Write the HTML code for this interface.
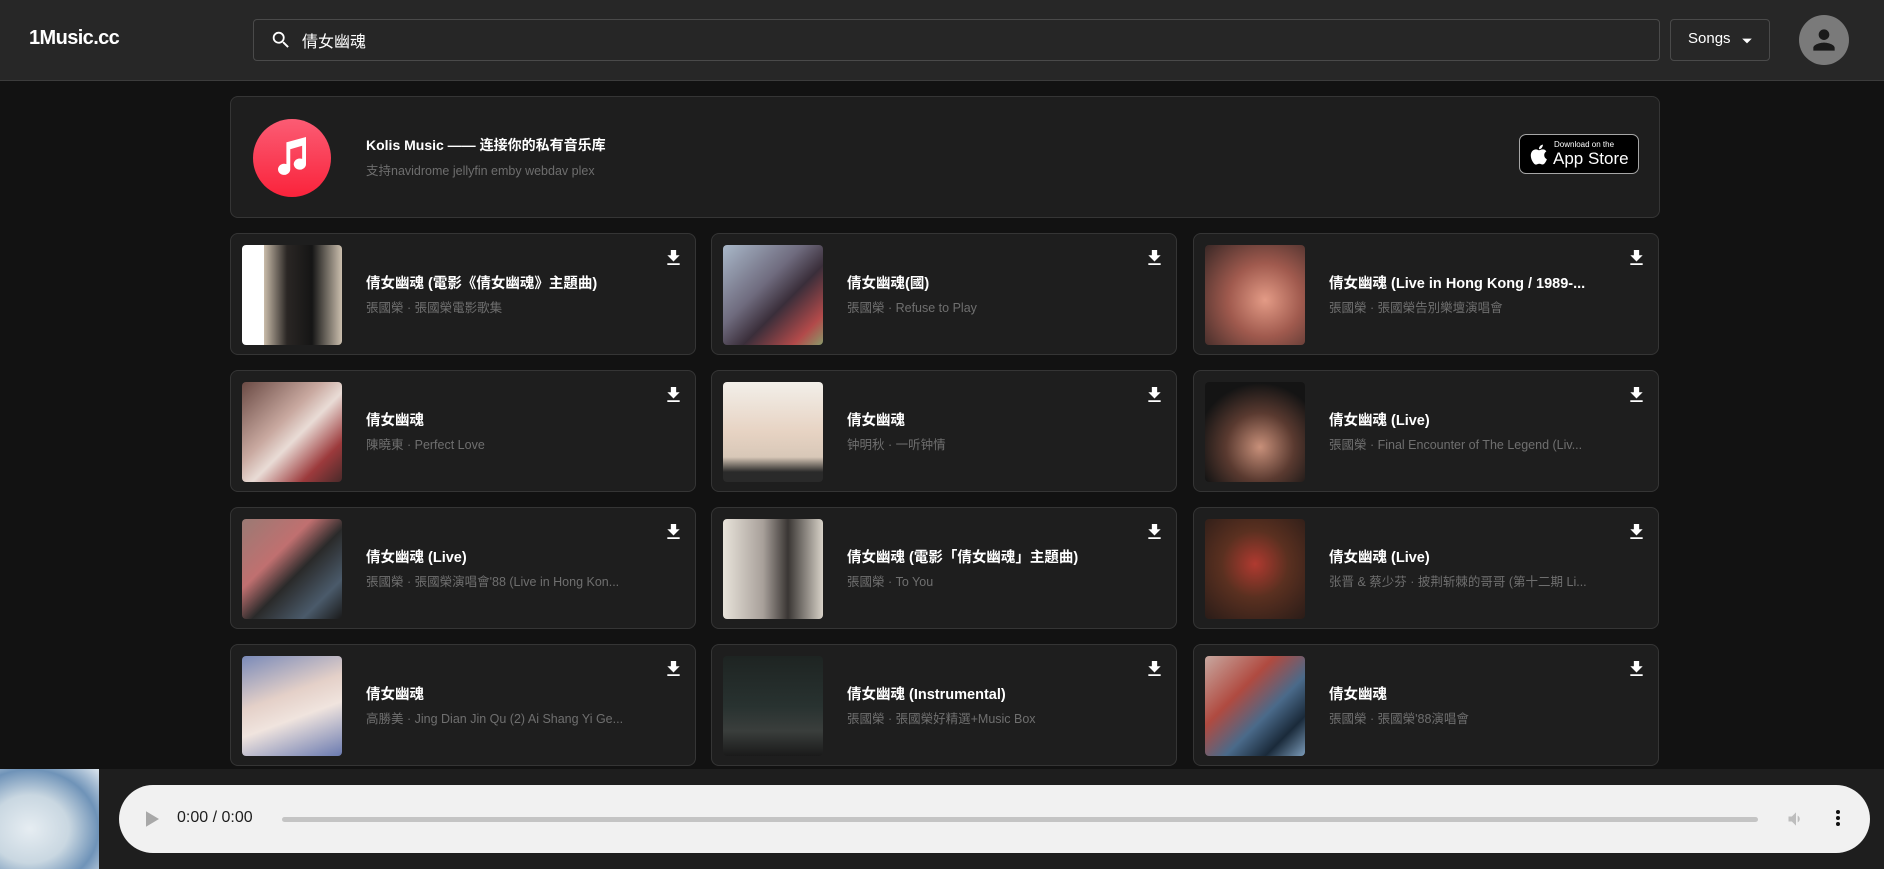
<!DOCTYPE html>
<html><head><meta charset="utf-8"><style>
*{box-sizing:border-box;margin:0;padding:0}
body{width:1884px;height:869px;background:#121212;font-family:"Liberation Sans","Noto Sans CJK SC",sans-serif;overflow:hidden;position:relative;color:#fff}
.hdr{position:absolute;left:0;top:0;width:1884px;height:81px;background:#272727;border-bottom:1px solid #3c3c3c}
.logo{position:absolute;left:29px;top:27px;font-size:20px;font-weight:bold;letter-spacing:-0.6px}
.search{position:absolute;left:253px;top:19px;width:1407px;height:42px;border:1px solid #4a4a4a;border-radius:4px;background:#262626}
.search span{position:absolute;left:48px;top:8px;font-size:16px}
.songs{position:absolute;left:1670px;top:19px;width:100px;height:42px;border:1px solid #4a4a4a;border-radius:4px;font-size:15px}
.songs span{position:absolute;left:17px;top:10px}
.avatar{position:absolute;left:1799px;top:15px;width:50px;height:50px;border-radius:50%;background:#7a7a7a}
.card{position:absolute;background:#1e1e1e;border:1px solid #353535;border-radius:8px}
.banner{left:230px;top:96px;width:1430px;height:122px}
.micon{position:absolute;left:22px;top:22px;width:78px;height:78px;border-radius:50%;background:linear-gradient(#fb5c74,#fa233b)}
.bt{position:absolute;left:135px;top:38px;font-size:14px;font-weight:bold}
.bs{position:absolute;left:135px;top:63px;font-size:12.5px;color:#6e6e6e}
.app{position:absolute;left:1288px;top:37px;width:120px;height:40px;background:#000;border:1px solid #a6a6a6;border-radius:7px}
.song{width:466px;height:122px}
.art{position:absolute;left:11px;top:11px;width:100px;height:100px;border-radius:4px}
.t{position:absolute;left:135px;top:38px;font-size:14.5px;font-weight:bold;white-space:nowrap;max-width:270px;overflow:hidden;text-overflow:ellipsis}
.s{position:absolute;left:135px;top:63px;font-size:12.5px;color:#6f6f6f;white-space:nowrap;max-width:270px;overflow:hidden;text-overflow:ellipsis}
.dl{position:absolute;left:436px;top:16px}
.player{position:absolute;left:0;top:769px;width:1884px;height:100px;background:#1e1e1e}
.thumb{position:absolute;left:0;top:0;width:99px;height:100px;background:radial-gradient(ellipse at 30% 60%,#e6edf2 0,#c9d7e1 40%,#6f93b8 70%,#dde6ee 100%)}
.pill{position:absolute;left:119px;top:16px;width:1751px;height:68px;background:#f1f1f1;border-radius:34px}
</style></head><body>
<div class="hdr">
<div class="logo">1Music.cc</div>
<div class="search"><svg style="position:absolute;left:16px;top:9px" width="22" height="22" viewBox="0 0 24 24"><path fill="#fff" d="M15.5 14h-.79l-.28-.27A6.47 6.47 0 0016 9.5 6.5 6.5 0 109.5 16c1.61 0 3.090-.59 4.23-1.57l.27.28v.79l5 4.99L20.49 19l-4.99-5zm-6 0C7.01 14 5 11.99 5 9.5S7.01 5 9.5 5 14 7.01 14 9.5 11.99 14 9.5 14z"/></svg><span>倩女幽魂</span></div>
<div class="songs"><span>Songs</span><svg style="position:absolute;left:70px;top:15px" width="12" height="12" viewBox="0 0 10 10"><path fill="#fff" d="M1 3h8L5 7z"/></svg></div>
<div class="avatar"><svg style="position:absolute;left:9px;top:9px" width="32" height="32" viewBox="0 0 24 24"><path fill="#1a1a1a" d="M12 12c2.2 0 4-1.8 4-4s-1.8-4-4-4-4 1.8-4 4 1.8 4 4 4zm0 2c-2.7 0-8 1.3-8 4v2h16v-2c0-2.7-5.3-4-8-4z"/></svg></div>
</div>

<div class="card banner">
<div class="micon"><svg style="position:absolute;left:18px;top:16px" width="42" height="46" viewBox="0 0 24 26"><path fill="#fff" d="M9 4l11-3v15.5a3.5 3.2 0 11-2.2-3V6L11 8v11.5a3.5 3.2 0 11-2.2-3V4z"/></svg></div>
<div class="bt">Kolis Music —— 连接你的私有音乐库</div>
<div class="bs">支持navidrome jellyfin emby webdav plex</div>
<div class="app"><svg style="position:absolute;left:8px;top:8px" width="20" height="23" viewBox="0 0 20 24"><path fill="#fff" d="M16.5 12.6c0-2.6 2.1-3.8 2.2-3.9-1.2-1.8-3.1-2-3.7-2-1.6-.2-3.1.9-3.9.9-.8 0-2-.9-3.4-.9C5.9 6.8 4.3 7.8 3.4 9.300c-1.9 3.2-.5 8 1.3 10.6.9 1.3 1.9 2.7 3.3 2.6 1.3-.1 1.8-.9 3.4-.9s2 .9 3.4.8c1.4 0 2.3-1.3 3.1-2.6 1-1.5 1.4-2.9 1.4-3-.1 0-2.8-1-2.8-4.2zM14 4.9c.7-.9 1.2-2 1.1-3.2-1 0-2.3.7-3 1.6-.7.8-1.200 2-1.1 3.1 1.2.1 2.3-.6 3-1.5z"/></svg><div style="position:absolute;left:34px;top:5px;font-size:8px">Download on the</div><div style="position:absolute;left:33px;top:14px;font-size:17px">App Store</div></div>
</div>

<div class="card song" style="left:230px;top:233px"><div class="art" style="background:linear-gradient(90deg,#fff 0 22%,#c9bcaa 22%,#2a2624 45%,#151515 70%,#cbbfae 100%)"></div><div class="t">倩女幽魂 (電影《倩女幽魂》主題曲)</div><div class="s">張國榮 · 張國榮電影歌集</div><svg class="dl" width="13" height="15" viewBox="0 0 14 17"><path fill="#fff" d="M14 6h-4V0H4v6H0l7 7zM0 15v2h14v-2z"/></svg></div>
<div class="card song" style="left:711px;top:233px"><div class="art" style="background:linear-gradient(135deg,#a9b8c9,#6f6b7e 40%,#3a2e3a 60%,#b24a4a 85%,#8a9a6a)"></div><div class="t">倩女幽魂(國)</div><div class="s">張國榮 · Refuse to Play</div><svg class="dl" width="13" height="15" viewBox="0 0 14 17"><path fill="#fff" d="M14 6h-4V0H4v6H0l7 7zM0 15v2h14v-2z"/></svg></div>
<div class="card song" style="left:1193px;top:233px"><div class="art" style="background:radial-gradient(circle at 60% 55%,#e39b86,#a05a4e 45%,#3a2826)"></div><div class="t">倩女幽魂 (Live in Hong Kong / 1989-...</div><div class="s">張國榮 · 張國榮告別樂壇演唱會</div><svg class="dl" width="13" height="15" viewBox="0 0 14 17"><path fill="#fff" d="M14 6h-4V0H4v6H0l7 7zM0 15v2h14v-2z"/></svg></div>

<div class="card song" style="left:230px;top:370px"><div class="art" style="background:linear-gradient(135deg,#6a4a44,#c9a9a0 40%,#e9dcd6 55%,#9c3a3c 80%,#4a2a2a)"></div><div class="t">倩女幽魂</div><div class="s">陳曉東 · Perfect Love</div><svg class="dl" width="13" height="15" viewBox="0 0 14 17"><path fill="#fff" d="M14 6h-4V0H4v6H0l7 7zM0 15v2h14v-2z"/></svg></div>
<div class="card song" style="left:711px;top:370px"><div class="art" style="background:linear-gradient(180deg,#f2efe9,#e7d3c3 50%,#d8c8b8 75%,#2a2a2a 90%)"></div><div class="t">倩女幽魂</div><div class="s">钟明秋 · 一听钟情</div><svg class="dl" width="13" height="15" viewBox="0 0 14 17"><path fill="#fff" d="M14 6h-4V0H4v6H0l7 7zM0 15v2h14v-2z"/></svg></div>
<div class="card song" style="left:1193px;top:370px"><div class="art" style="background:radial-gradient(circle at 55% 65%,#c8907a,#5a3a30 40%,#141414 75%)"></div><div class="t">倩女幽魂 (Live)</div><div class="s">張國榮 · Final Encounter of The Legend (Liv...</div><svg class="dl" width="13" height="15" viewBox="0 0 14 17"><path fill="#fff" d="M14 6h-4V0H4v6H0l7 7zM0 15v2h14v-2z"/></svg></div>

<div class="card song" style="left:230px;top:507px"><div class="art" style="background:linear-gradient(135deg,#9a7a74,#c07070 35%,#2a2a2a 55%,#4a5a6a 80%,#1a1a1a)"></div><div class="t">倩女幽魂 (Live)</div><div class="s">張國榮 · 張國榮演唱會'88 (Live in Hong Kon...</div><svg class="dl" width="13" height="15" viewBox="0 0 14 17"><path fill="#fff" d="M14 6h-4V0H4v6H0l7 7zM0 15v2h14v-2z"/></svg></div>
<div class="card song" style="left:711px;top:507px"><div class="art" style="background:linear-gradient(90deg,#e8e3da,#a8a09a 40%,#3a3634 65%,#d8d2c8)"></div><div class="t">倩女幽魂 (電影「倩女幽魂」主題曲)</div><div class="s">張國榮 · To You</div><svg class="dl" width="13" height="15" viewBox="0 0 14 17"><path fill="#fff" d="M14 6h-4V0H4v6H0l7 7zM0 15v2h14v-2z"/></svg></div>
<div class="card song" style="left:1193px;top:507px"><div class="art" style="background:radial-gradient(circle at 50% 45%,#b03a30,#5a3020 45%,#2a1c18)"></div><div class="t">倩女幽魂 (Live)</div><div class="s">张晋 &amp; 蔡少芬 · 披荆斩棘的哥哥 (第十二期 Li...</div><svg class="dl" width="13" height="15" viewBox="0 0 14 17"><path fill="#fff" d="M14 6h-4V0H4v6H0l7 7zM0 15v2h14v-2z"/></svg></div>

<div class="card song" style="left:230px;top:644px"><div class="art" style="background:linear-gradient(160deg,#7a8ab8,#e4d0c8 40%,#f0e4de 60%,#6a7ab0)"></div><div class="t">倩女幽魂</div><div class="s">高勝美 · Jing Dian Jin Qu (2) Ai Shang Yi Ge...</div><svg class="dl" width="13" height="15" viewBox="0 0 14 17"><path fill="#fff" d="M14 6h-4V0H4v6H0l7 7zM0 15v2h14v-2z"/></svg></div>
<div class="card song" style="left:711px;top:644px"><div class="art" style="background:linear-gradient(180deg,#1e2422,#283230 50%,#3a3e3c 75%,#1a1a1a)"></div><div class="t">倩女幽魂 (Instrumental)</div><div class="s">張國榮 · 張國榮好精選+Music Box</div><svg class="dl" width="13" height="15" viewBox="0 0 14 17"><path fill="#fff" d="M14 6h-4V0H4v6H0l7 7zM0 15v2h14v-2z"/></svg></div>
<div class="card song" style="left:1193px;top:644px"><div class="art" style="background:linear-gradient(135deg,#c8a8a0,#b04a40 35%,#4a6a8a 60%,#1a2a3a 80%,#7a9ab8)"></div><div class="t">倩女幽魂</div><div class="s">張國榮 · 張國榮'88演唱會</div><svg class="dl" width="13" height="15" viewBox="0 0 14 17"><path fill="#fff" d="M14 6h-4V0H4v6H0l7 7zM0 15v2h14v-2z"/></svg></div>

<div class="player">
<div class="thumb"></div>
<div class="pill">
<svg style="position:absolute;left:27px;top:26px" width="13" height="16" viewBox="0 0 10 12"><path fill="#a8a8a8" d="M0 0l10 6-10 6z"/></svg>
<div style="position:absolute;left:58px;top:24px;font-size:16px;color:#1e1e1e">0:00 / 0:00</div>
<div style="position:absolute;left:163px;top:32px;width:1476px;height:5px;border-radius:3px;background:#c4c4c4"></div>
<svg style="position:absolute;left:1667px;top:24px" width="20" height="20" viewBox="0 0 24 24"><path fill="#bdbdbd" d="M3 9v6h4l5 5V4L7 9H3zm13.5 3A4.5 4.5 0 0014 8v8a4.5 4.5 0 002.5-4z"/></svg>
<div style="position:absolute;left:1717px;top:25px;width:4px;height:4px;border-radius:50%;background:#111;box-shadow:0 6px 0 #111,0 12px 0 #111"></div>
</div>
</div>
</body></html>
